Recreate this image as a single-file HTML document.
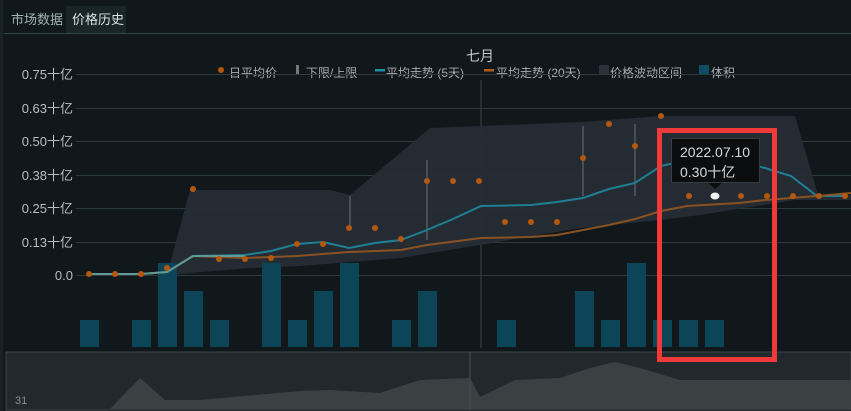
<!DOCTYPE html><html><head><meta charset="utf-8"><style>
body{margin:0;width:851px;height:411px;background:#0f171b;overflow:hidden;font-family:"Liberation Sans","Noto Sans CJK SC",sans-serif;}
</style></head><body>
<svg width="851" height="411" xmlns="http://www.w3.org/2000/svg" style="position:absolute;left:0;top:0">
<rect width="851" height="411" fill="#10181c"/>
<rect x="0" y="0" width="3" height="411" fill="#1a2226"/>
<rect x="66" y="6" width="60" height="27" fill="#1a2529"/>
<text x="11" y="24" font-size="13" fill="#9fb6b4" font-family="Liberation Sans,Noto Sans CJK SC,sans-serif">市场数据</text>
<text x="72" y="24" font-size="13" fill="#d7e6e4" font-family="Liberation Sans,Noto Sans CJK SC,sans-serif">价格历史</text>
<line x1="4" y1="33.5" x2="851" y2="33.5" stroke="#2f4744"/>
<text x="466" y="61" font-size="14" fill="#c8cccc" font-family="Liberation Sans,Noto Sans CJK SC,sans-serif">七月</text>
<g font-size="12" fill="#a8adb0" font-family="Liberation Sans,Noto Sans CJK SC,sans-serif">
<circle cx="221" cy="70" r="3" fill="#b3580e"/><text x="229" y="77">日平均价</text>
<rect x="296" y="65" width="3" height="9" fill="#777"/><text x="306" y="77">下限/上限</text>
<rect x="375" y="69" width="10" height="2.5" fill="#1d8ea8"/><text x="386" y="77">平均走势 (5天)</text>
<rect x="484" y="69" width="10" height="2.5" fill="#b35e1e"/><text x="496" y="77">平均走势 (20天)</text>
<rect x="599" y="65" width="10" height="9" fill="#2c323b"/><text x="610" y="77">价格波动区间</text>
<rect x="699" y="65" width="10" height="9" fill="#0d4e62"/><text x="711" y="77">体积</text>
</g>
<g font-size="13" fill="#b9bdbf" text-anchor="end" font-family="Liberation Sans,Noto Sans CJK SC,sans-serif">
<text x="73" y="79">0.75十亿</text><text x="73" y="113">0.63十亿</text><text x="73" y="146">0.50十亿</text><text x="73" y="180">0.38十亿</text><text x="73" y="213">0.25十亿</text><text x="73" y="247">0.13十亿</text><text x="73" y="280">0.0</text>
</g>
<g stroke="#2c3a3c" stroke-width="1">
<line x1="76" y1="74.5" x2="851" y2="74.5"/><line x1="76" y1="108.5" x2="851" y2="108.5"/><line x1="76" y1="141.5" x2="851" y2="141.5"/><line x1="76" y1="175.5" x2="851" y2="175.5"/><line x1="76" y1="208.5" x2="851" y2="208.5"/><line x1="76" y1="242.5" x2="851" y2="242.5"/><line x1="76" y1="275.5" x2="851" y2="275.5"/>
</g>
<line x1="481" y1="80" x2="481" y2="348" stroke="#3a4548"/>
<polygon fill="#262c35" opacity="0.95" points="167,275 190,190 330,190 350,195 430,128 583,122 583,122 660,116 795,116 818,195 851,195 851,200 818,200 795,200 700,215 660,220 580,228 480,245 400,258 300,266 250,268 167,275"/>
<g stroke="#6a7074" stroke-width="1">
<line x1="350" y1="196" x2="350" y2="228"/><line x1="427" y1="160" x2="427" y2="240"/><line x1="583" y1="126" x2="583" y2="196"/><line x1="635" y1="124" x2="635" y2="196"/>
</g>
<g fill="#0c4557">
<rect x="80" y="320" width="19" height="27"/><rect x="132" y="320" width="19" height="27"/><rect x="158" y="263" width="19" height="84"/><rect x="184" y="291" width="19" height="56"/><rect x="210" y="320" width="19" height="27"/><rect x="262" y="263" width="19" height="84"/><rect x="288" y="320" width="19" height="27"/><rect x="314" y="291" width="19" height="56"/><rect x="340" y="263" width="19" height="84"/><rect x="392" y="320" width="19" height="27"/><rect x="418" y="291" width="19" height="56"/><rect x="497" y="320" width="19" height="27"/><rect x="575" y="291" width="19" height="56"/><rect x="601" y="320" width="19" height="27"/><rect x="627" y="263" width="19" height="84"/><rect x="653" y="320" width="19" height="27"/><rect x="679" y="320" width="19" height="27"/><rect x="705" y="320" width="19" height="27"/>
</g>
<polyline fill="none" stroke="#1f7f95" stroke-width="2" points="89,274 141,274 167,272 193,256 245,255 271,251 297,244 323,242 349,248 375,243 401,240 427,230 453,219 481,206 531,205 557,202 583,198 609,189 635,183 661,166 687,160 713,158 739,162 765,168 791,176 817,196 843,196"/>
<polyline fill="none" stroke="#8a5222" stroke-width="2" points="89,274 141,274 167,272 193,256 245,258 297,256 349,252 401,250 427,245 481,238 531,237 557,235 583,230 609,225 635,219 661,211 687,206 739,203 765,200 791,198 817,196 851,193"/>
<polyline fill="none" stroke="#5f9a94" stroke-width="2" points="89,274 141,274 167,272 193,256 245,256"/>
<g fill="#b3580e">
<circle cx="89" cy="274" r="3"/><circle cx="115" cy="274" r="3"/><circle cx="141" cy="274" r="3"/><circle cx="167" cy="268" r="3"/><circle cx="193" cy="189" r="3"/><circle cx="219" cy="259" r="3"/><circle cx="245" cy="259" r="3"/><circle cx="271" cy="258" r="3"/><circle cx="297" cy="244" r="3"/><circle cx="323" cy="244" r="3"/><circle cx="349" cy="228" r="3"/><circle cx="375" cy="228" r="3"/><circle cx="401" cy="239" r="3"/><circle cx="427" cy="181" r="3"/><circle cx="453" cy="181" r="3"/><circle cx="479" cy="181" r="3"/><circle cx="505" cy="222" r="3"/><circle cx="531" cy="222" r="3"/><circle cx="557" cy="222" r="3"/><circle cx="583" cy="158" r="3"/><circle cx="609" cy="124" r="3"/><circle cx="635" cy="146" r="3"/><circle cx="661" cy="116" r="3"/><circle cx="689" cy="196" r="3"/><circle cx="741" cy="196" r="3"/><circle cx="767" cy="196" r="3"/><circle cx="793" cy="196" r="3"/><circle cx="819" cy="196" r="3"/><circle cx="845" cy="196" r="3"/>
</g>
<ellipse cx="715" cy="196" rx="4.5" ry="3.5" fill="#f0f0f0"/>
<rect x="671.5" y="138.5" width="88" height="44" fill="#0b0d0e" stroke="#3a3d3f"/>
<polygon points="708,183 722,183 715,189" fill="#0b0d0e"/>
<text x="680" y="157" font-size="14" fill="#d8d8d8" font-family="Liberation Sans,Noto Sans CJK SC,sans-serif">2022.07.10</text>
<text x="680" y="177" font-size="14" fill="#d8d8d8" font-family="Liberation Sans,Noto Sans CJK SC,sans-serif">0.30十亿</text>
<rect x="6" y="352" width="845" height="58" fill="#22292c" stroke="#3d4446"/>
<polygon fill="#3b4043" points="6,409 110,409 140,378 165,400 200,400 300,391 330,390 380,393 420,380 470,378 480,397 515,380 560,378 590,368 615,362 640,368 680,380 851,380 851,409"/>
<line x1="470" y1="352" x2="470" y2="410" stroke="#4a5052"/>
<text x="15" y="404" font-size="11" fill="#8a9092" font-family="Liberation Sans,sans-serif">31</text>
<rect x="659.5" y="130.5" width="115" height="229" fill="none" stroke="#f03a3a" stroke-width="5"/>
</svg>
</body></html>
